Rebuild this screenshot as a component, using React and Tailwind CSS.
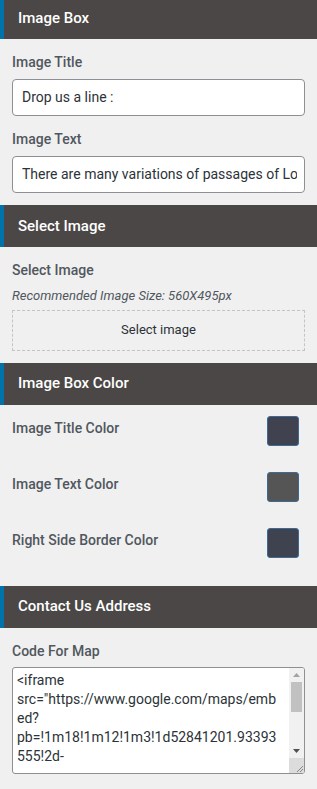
export default function App() {
  const Header = ({ title, className = '' }) => (
    <div className={`h-[42px] flex items-center bg-[#4b4746] border-l-4 border-[#0073aa] pl-[14px] ${className}`}>
      <span className="text-white text-[15px] font-medium">{title}</span>
    </div>
  );

  const Label = ({ children, className = '' }) => (
    <div className={`text-[14px] font-medium text-[#50575e] leading-5 ${className}`}>{children}</div>
  );

  const Field = ({ value }) => (
    <div className="mx-3 h-[37px] bg-white border border-[#8c8f94] rounded-[4px] flex items-center pl-[9px] pr-[7px]">
      <div className="flex-1 overflow-hidden whitespace-nowrap text-[14px] text-[#2c3338]">{value}</div>
    </div>
  );

  const ColorRow = ({ label, color }) => (
    <div className="h-[56px] flex items-start justify-between pl-3 pr-[18px]">
      <Label className="pt-[13px]">{label}</Label>
      <div className={`mt-[11px] w-[32px] h-[30px] rounded-[3px] border border-[#3d6a94] ${color}`} />
    </div>
  );

  const lines = [
    '<iframe',
    'src="https://www.google.com/maps/emb',
    'ed?',
    'pb=!1m18!1m12!1m3!1d52841201.93393',
    '555!2d-',
  ];

  return (
    <div className="min-h-screen bg-[#f0f0f0] overflow-hidden" style={{ fontFamily: 'Roboto, "Liberation Sans", sans-serif' }}>
      <Header title="Image Box" className="-mt-[3px]" />
      <Label className="px-3 pt-[13px]">Image Title</Label>
      <div className="pt-[7px]"><Field value="Drop us a line :" /></div>
      <Label className="px-3 pt-[13px]">Image Text</Label>
      <div className="pt-[7px]"><Field value="There are many variations of passages of Lorem Ipsum available" /></div>

      <Header title="Select Image" className="mt-3" />
      <Label className="px-3 pt-[13px]">Select Image</Label>
      <div className="px-3 pt-[6px] text-[13px] italic text-[#50575e]">Recommended Image Size: 560X495px</div>
      <div className="mx-3 mt-[4px] h-[41px] border border-dashed border-[#c3c4c7] flex items-center justify-center">
        <span className="text-[13px] text-[#2c3338]">Select image</span>
      </div>

      <Header title="Image Box Color" className="mt-3" />
      <ColorRow label="Image Title Color" color="bg-[#40434f]" />
      <ColorRow label="Image Text Color" color="bg-[#555555]" />
      <ColorRow label="Right Side Border Color" color="bg-[#3f4350]" />

      <Header title="Contact Us Address" className="mt-[13px]" />
      <Label className="px-3 pt-[13px]">Code For Map</Label>
      <div className="mx-3 mt-[6px] h-[107px] bg-white border border-[#8c8f94] rounded-[3px] flex overflow-hidden">
        <div className="flex-1 pl-[4px] pt-[3px] text-[14px] leading-[19px] text-[#2c3338] whitespace-nowrap overflow-hidden">
          {lines.map((l, i) => (
            <div key={i}>{l}</div>
          ))}
        </div>
        <div className="w-[15px] flex flex-col bg-[#f1f1f1]">
          <div className="h-[14px] flex items-center justify-center">
            <svg width="7" height="4" viewBox="0 0 7 4"><path d="M0 4 L3.5 0 L7 4 Z" fill="#a3a3a3" /></svg>
          </div>
          <div className="mx-[2px] h-[30px] bg-[#c1c1c1]" />
          <div className="flex-1" />
          <div className="h-[14px] flex items-center justify-center">
            <svg width="7" height="4" viewBox="0 0 7 4"><path d="M0 0 L3.5 4 L7 0 Z" fill="#505050" /></svg>
          </div>
          <div className="h-[15px] bg-[#dcdcdc] flex items-end justify-end">
            <svg width="8" height="8" viewBox="0 0 8 8"><path d="M7 1 L1 7 M7 4 L4 7" stroke="#888" strokeWidth="1" /></svg>
          </div>
        </div>
      </div>
    </div>
  );
}
